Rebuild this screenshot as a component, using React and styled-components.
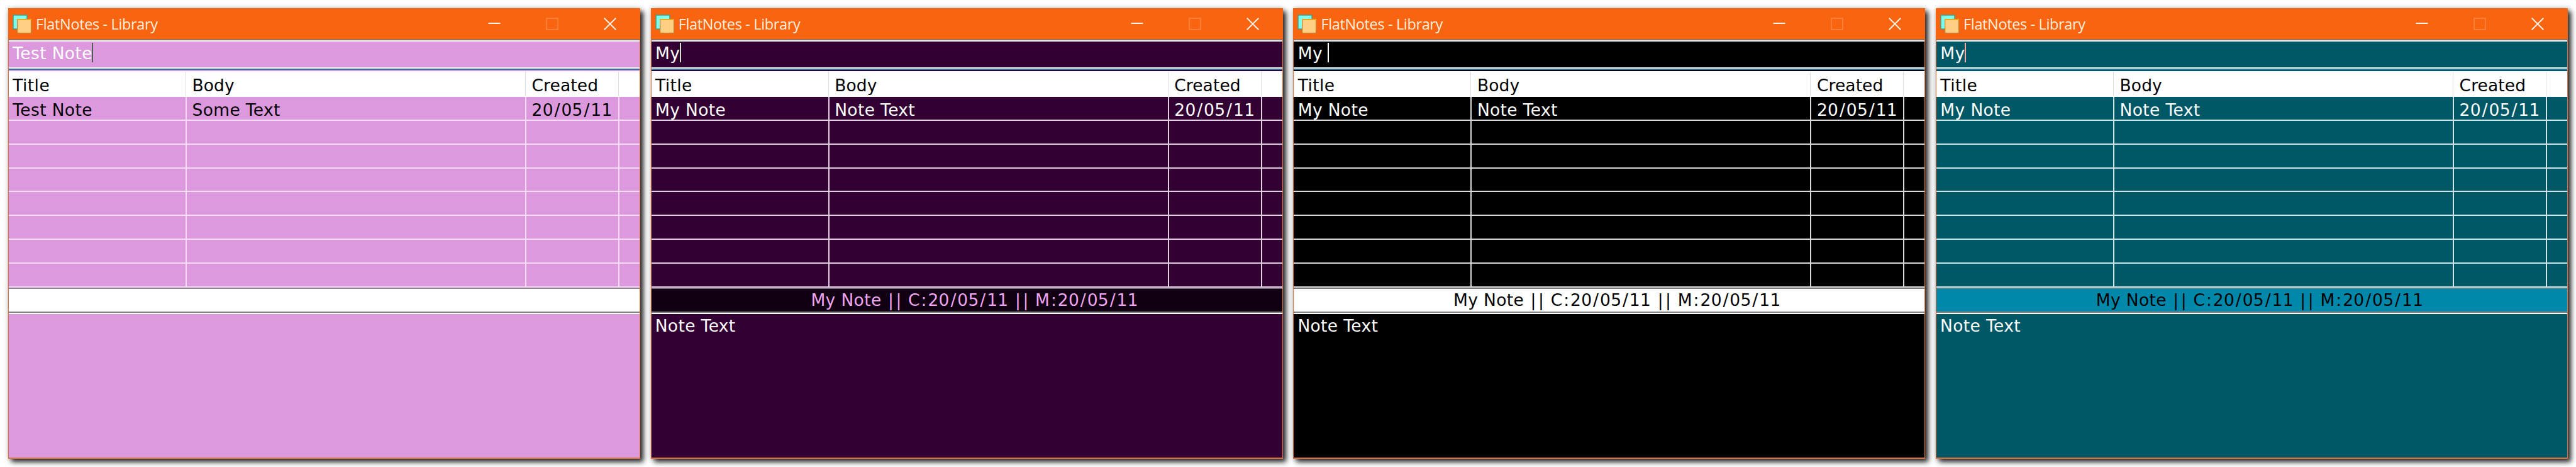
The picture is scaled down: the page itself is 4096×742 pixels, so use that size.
import React from 'react';
import styled, { createGlobalStyle, ThemeProvider } from 'styled-components';

const GlobalStyle = createGlobalStyle`
  body { margin: 0; background: #fff; overflow: hidden; }
  * { box-sizing: border-box; }
`;

const Desktop = styled.main`
  display: flex;
  gap: 16.7px;
  width: 4096px;
  height: 742px;
  padding: 13px 0 13px 13px;
  font: 26.5px/31px 'DejaVu Sans', sans-serif;
  letter-spacing: 0.35px;
  white-space: pre;
`;

const Window = styled.section`
  flex: none;
  display: flex;
  flex-direction: column;
  width: 1005px;
  height: 716px;
  border: solid #df6f3c;
  border-width: 0 1px 2px;
  background: ${(p) => p.theme.bg};
  color: ${(p) => p.theme.text};
  box-shadow: 5px 5px 8px rgba(0, 0, 0, 0.85), 0 0 8px rgba(0, 0, 0, 0.2);
`;

const TitleBar = styled.header`
  flex: none;
  display: flex;
  align-items: center;
  height: 50px;
  margin: 0 -1px;
  padding: 0 2px 0 6px;
  background: #f8640f;
`;

const AppIcon = styled.svg`
  flex: none;
  width: 32px;
  height: 32px;
`;

const WindowTitle = styled.h1`
  flex: 1;
  margin: 0 0 0 6px;
  color: #ffeedd;
  font: 400 23.5px/32px 'Open Sans', sans-serif;
  letter-spacing: -0.36px;
`;

const ControlButton = styled.button`
  display: flex;
  align-items: center;
  justify-content: center;
  width: 92px;
  height: 50px;
  padding: 0;
  border: 0;
  background: none;
  color: ${(p) => (p.$faded ? '#ff8742' : '#fff0e2')};
`;

const Glyph = styled.svg`
  width: 20px;
  height: 20px;
  fill: none;
  stroke: currentColor;
  stroke-width: 2;
`;

const Rule = styled.div`
  flex: none;
  height: ${(p) => p.$size}px;
  background: ${(p) => p.$color};
`;

const SearchBox = styled.div`
  flex: none;
  display: flex;
  height: 41px;
  padding: 3px 0 0 6.3px;
  color: ${(p) => p.theme.searchText};
`;

const Caret = styled.span`
  width: 2px;
  height: 31px;
  margin: -1px 0 0 -0.7px;
  background: ${(p) => p.theme.caret};
`;

const columns = '283px 540px 148px 1fr';

const TableHead = styled.div`
  flex: none;
  display: grid;
  grid-template-columns: ${columns};
  height: 41px;
  margin-top: 2px;
  background: #fff;
  color: #000;
`;

const HeadCell = styled.div`
  margin: 1px 1px 2px 0;
  padding: 5.5px 0 0 8.5px;
  border-right: 1px solid #dfdfdf;
  letter-spacing: ${(p) => p.$tracking}px;
  &:first-child { padding-left: 6.3px; }
  &:last-child { border: 0; }
`;

const TableBody = styled.div`
  flex: none;
  display: grid;
  grid-template-rows: 38.2px repeat(7, 37.77px);
`;

const Row = styled.div`
  display: grid;
  grid-template-columns: ${columns};
  border-bottom: 2px solid ${(p) => p.theme.grid};
`;

const Cell = styled.div`
  padding: 5px 0 0 8.5px;
  border-right: 2px solid ${(p) => p.theme.grid};
  color: ${(p) => p.theme.rowText};
  &:first-child { padding-left: 6.3px; }
  &:last-child { border: 0; }
`;

const StatusBar = styled.div`
  flex: none;
  height: 36px;
  padding: 2px 0 0 25px;
  background: ${(p) => p.theme.statusBg};
  color: ${(p) => p.theme.statusText};
  text-align: center;
`;

const Editor = styled.div`
  flex: 1;
  padding: 3px 0 0 6px;
`;

const Mark = styled.span`
  padding: 0 1.6px;
`;

const themes = [
  {
    bg: '#dc99dd', text: '#000', searchText: '#fff', rowText: '#000', grid: '#f3dcf4',
    statusBg: '#fff', statusText: '#000', caret: '#4c5f54', edge: '#8b7d93',
  },
  {
    bg: '#330033', text: '#fff', searchText: '#fff', rowText: '#fff', grid: '#e0d2e2',
    statusBg: '#110011', statusText: '#f0a4f2', caret: '#cfe6cb', edge: '#7b6a80',
  },
  {
    bg: '#000', text: '#fff', searchText: '#fff', rowText: '#fff', grid: '#d9d9d9',
    statusBg: '#fff', statusText: '#000', caret: '#fff', edge: '#777',
  },
  {
    bg: '#005866', text: '#fff', searchText: '#fff', rowText: '#fff', grid: '#cfe6e9',
    statusBg: '#0088aa', statusText: '#000', caret: '#f6aaa2', edge: '#66808a',
  },
];

const myNote = { title: 'My Note', body: 'Note Text', created: '20/05/11' };
const windows = [
  { query: 'Test Note', note: { title: 'Test Note', body: 'Some Text', created: '20/05/11' } },
  { query: 'My', note: myNote, open: true },
  { query: 'My ', note: myNote, open: true },
  { query: 'My', note: myNote, open: true },
];

// Punctuation in dates and separators is set a little wider than the letters.
const Spaced = ({ children }) =>
  children.split(/([/:|])/).map((part, i) => (i % 2 ? <Mark key={i}>{part}</Mark> : part));

const emptyRows = [1, 2, 3, 4, 5, 6, 7];

function NotesWindow({ query, note, open, edge }) {
  return (
    <Window>
      <TitleBar>
        <AppIcon viewBox="0 0 32 32">
          <rect x="2" y="2" width="22" height="22" fill="#7dfdee" stroke="#4b9c80" strokeWidth="1.5" />
          <rect x="8.7" y="8.7" width="21.8" height="21.8" fill="#ffd083" stroke="#c48a3c" strokeWidth="1.3" />
          <path d="M8 9H31" stroke="#efa81c" strokeWidth="2" />
        </AppIcon>
        <WindowTitle>FlatNotes - Library</WindowTitle>
        <ControlButton><Glyph viewBox="0 0 20 20"><path d="M0.5 9H19.5" /></Glyph></ControlButton>
        <ControlButton $faded><Glyph viewBox="0 0 20 20"><path d="M1 1H19V19H1Z" strokeWidth="1.5" /></Glyph></ControlButton>
        <ControlButton><Glyph viewBox="0 0 20 20"><path d="M0.7 0.7L19.3 19.3M19.3 0.7L0.7 19.3" /></Glyph></ControlButton>
      </TitleBar>
      <Rule $size={1} $color="#1f73a3" />
      <Rule $size={2} $color="#f4fbff" />
      <SearchBox>{query}<Caret /></SearchBox>
      <Rule $size={2} $color="#f4fbff" />
      <Rule $size={2} $color="#2a76a8" />
      <TableHead>
        <HeadCell $tracking={0.4}>Title</HeadCell>
        <HeadCell $tracking={0.1}>Body</HeadCell>
        <HeadCell $tracking={0.1}>Created</HeadCell>
        <HeadCell />
      </TableHead>
      <TableBody>
        <Row>
          <Cell>{note.title}</Cell>
          <Cell>{note.body}</Cell>
          <Cell><Spaced>{note.created}</Spaced></Cell>
          <Cell />
        </Row>
        {emptyRows.map((n) => <Row key={n}><Cell /><Cell /><Cell /><Cell /></Row>)}
      </TableBody>
      <Rule $size={0.4} $color="transparent" />
      <Rule $size={2} $color={edge} />
      <StatusBar>
        {open && <Spaced>{`${note.title} || C:${note.created} || M:${note.created}`}</Spaced>}
      </StatusBar>
      <Rule $size={2} $color="#828282" />
      <Rule $size={2} $color="#fff" />
      <Editor>{open && note.body}</Editor>
    </Window>
  );
}

export default function App() {
  return (
    <>
      <GlobalStyle />
      <Desktop>
        {windows.map((w, i) => (
          <ThemeProvider theme={themes[i]} key={i}>
            <NotesWindow {...w} edge={themes[i].edge} />
          </ThemeProvider>
        ))}
      </Desktop>
    </>
  );
}
